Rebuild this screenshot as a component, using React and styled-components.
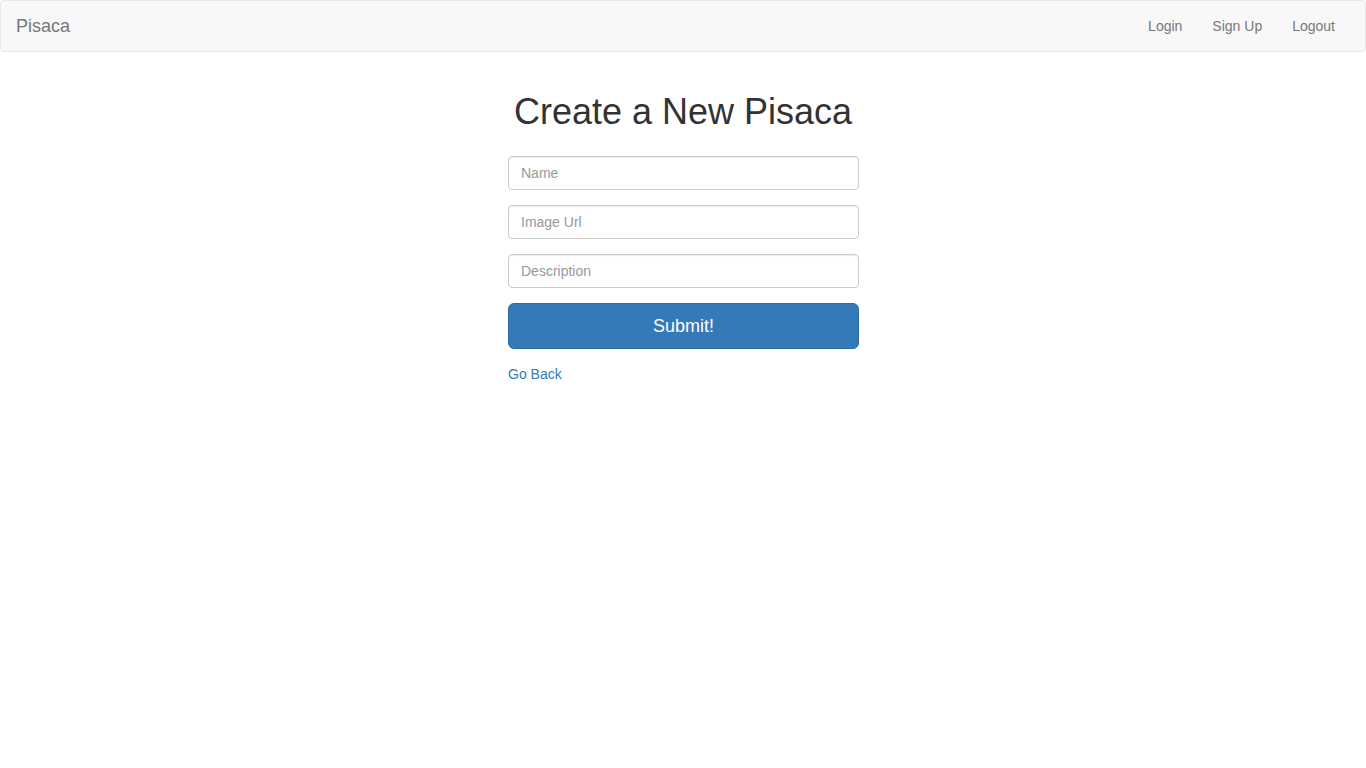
import React from 'react';
import styled, { createGlobalStyle } from 'styled-components';

const GlobalStyle = createGlobalStyle`
  * { box-sizing: border-box; }
  body {
    margin: 0;
    font-family: "Liberation Sans", Arial, Helvetica, sans-serif;
    font-size: 14px;
    line-height: 1.42857;
    color: #333;
    background: #fff;
  }
`;

const Navbar = styled.nav`
  display: flex;
  justify-content: space-between;
  align-items: center;
  min-height: 52px;
  background-color: #f8f8f8;
  border: 1px solid #e7e7e7;
  border-radius: 4px;
  margin-bottom: 20px;
`;

const Brand = styled.a`
  padding: 15px;
  font-size: 18px;
  line-height: 20px;
  color: #777;
  text-decoration: none;
`;

const NavList = styled.ul`
  display: flex;
  list-style: none;
  margin: 0;
  padding: 0 15px 0 0;
`;

const NavLink = styled.a`
  display: block;
  padding: 15px;
  line-height: 20px;
  color: #777;
  text-decoration: none;
`;

const Main = styled.main`
  display: flex;
  flex-direction: column;
  align-items: center;
`;

const Title = styled.h1`
  font-size: 36px;
  font-weight: 500;
  line-height: 1.1;
  margin: 20px 0 24px;
  color: #333;
`;

const Form = styled.form`
  width: 351px;
  margin-left: 1px;
  display: flex;
  flex-direction: column;
`;

const Input = styled.input`
  display: block;
  width: 100%;
  height: 34px;
  padding: 6px 12px;
  margin-bottom: 15px;
  font-family: inherit;
  font-size: 14px;
  color: #555;
  border: 1px solid #ccc;
  border-radius: 4px;
  box-shadow: inset 0 1px 1px rgba(0, 0, 0, 0.075);
  outline: none;

  &::placeholder {
    color: #999;
  }
`;

const SubmitButton = styled.button`
  width: 100%;
  height: 46px;
  padding: 11px 16px 9px;
  font-family: inherit;
  font-size: 18px;
  line-height: 1.3333;
  color: #fff;
  background-color: #337ab7;
  border: 1px solid #2e6da4;
  border-radius: 6px;
  cursor: pointer;
`;

const BackLink = styled.a`
  margin-top: 16px;
  color: #337ab7;
  text-decoration: none;
  align-self: flex-start;
`;

export default function App() {
  return (
    <>
      <GlobalStyle />
      <Navbar>
        <Brand href="#">Pisaca</Brand>
        <NavList>
          <li><NavLink href="#">Login</NavLink></li>
          <li><NavLink href="#">Sign Up</NavLink></li>
          <li><NavLink href="#">Logout</NavLink></li>
        </NavList>
      </Navbar>
      <Main>
        <Title>Create a New Pisaca</Title>
        <Form onSubmit={(e) => e.preventDefault()}>
          <Input type="text" placeholder="Name" />
          <Input type="text" placeholder="Image Url" />
          <Input type="text" placeholder="Description" />
          <SubmitButton type="submit">Submit!</SubmitButton>
          <BackLink href="#">Go Back</BackLink>
        </Form>
      </Main>
    </>
  );
}
